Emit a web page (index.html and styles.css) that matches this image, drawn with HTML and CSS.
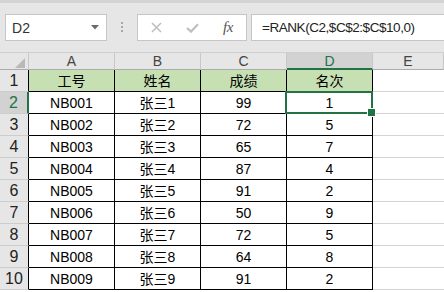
FILE: index.html
```html
<!DOCTYPE html>
<html lang="zh-CN">
<head>
<meta charset="utf-8">
<title>RANK</title>
<link rel="stylesheet" href="styles.css">
</head>
<body>
<div class="toolbar">
  <div class="namebox">
    <span class="ref">D2</span>
    <svg class="arrow" width="8" height="5" viewBox="0 0 8 5"><polygon points="0,0 8,0 4,4.5" fill="#6b6b6b"/></svg>
  </div>
  <div class="sep"><i></i><i></i><i></i></div>
  <div class="fbtns">
    <span class="btn"><svg width="11" height="11" viewBox="0 0 11 11"><path d="M1 1 L10 10 M10 1 L1 10" stroke="#bfbfbf" stroke-width="1.6" fill="none"/></svg></span>
    <span class="btn"><svg width="13" height="10" viewBox="0 0 13 10"><path d="M1 5 L5 8.6 L12 1.2" stroke="#bfbfbf" stroke-width="2.2" fill="none"/></svg></span>
    <span class="btn fx">fx</span>
  </div>
  <div class="formula">=RANK(C2,$C$2:$C$10,0)</div>
</div>

<div class="sheet">
  <div class="hd corner"><svg width="10" height="10" viewBox="0 0 10 10"><polygon points="10,0 10,10 0,10" fill="#b9b9b9"/></svg></div>
  <div class="hd">A</div><div class="hd">B</div><div class="hd">C</div><div class="hd sel">D</div><div class="hd">E</div>

  <div class="rh">1</div><div class="c g">工号</div><div class="c g">姓名</div><div class="c g">成绩</div><div class="c g">名次</div><div class="e"></div>
  <div class="rh sel">2</div><div class="c">NB001</div><div class="c">张三1</div><div class="c">99</div><div class="c cur">1</div><div class="e"></div>
  <div class="rh">3</div><div class="c">NB002</div><div class="c">张三2</div><div class="c">72</div><div class="c">5</div><div class="e"></div>
  <div class="rh">4</div><div class="c">NB003</div><div class="c">张三3</div><div class="c">65</div><div class="c">7</div><div class="e"></div>
  <div class="rh">5</div><div class="c">NB004</div><div class="c">张三4</div><div class="c">87</div><div class="c">4</div><div class="e"></div>
  <div class="rh">6</div><div class="c">NB005</div><div class="c">张三5</div><div class="c">91</div><div class="c">2</div><div class="e"></div>
  <div class="rh">7</div><div class="c">NB006</div><div class="c">张三6</div><div class="c">50</div><div class="c">9</div><div class="e"></div>
  <div class="rh">8</div><div class="c">NB007</div><div class="c">张三7</div><div class="c">72</div><div class="c">5</div><div class="e"></div>
  <div class="rh">9</div><div class="c">NB008</div><div class="c">张三8</div><div class="c">64</div><div class="c">8</div><div class="e"></div>
  <div class="rh">10</div><div class="c">NB009</div><div class="c">张三9</div><div class="c">91</div><div class="c">2</div><div class="e"></div>
</div>
</body>
</html>
```

FILE: styles.css
```css
* { box-sizing: border-box; }
html, body { margin: 0; padding: 0; }
body {
  width: 444px;
  height: 292px;
  overflow: hidden;
  background: #ffffff;
  font-family: "Liberation Sans", "Noto Sans CJK SC", sans-serif;
  color: #000;
}

/* ---------- formula bar ---------- */
.toolbar {
  height: 52px;
  background: #e6e6e6;
  border-top: 3px solid #d4d4d4;
  display: flex;
  align-items: flex-start;
  padding: 11px 0 0 5px;
}
.namebox {
  width: 102px;
  height: 27px;
  background: #fff;
  border: 1px solid #c6c6c6;
  display: flex;
  align-items: center;
  padding: 0 6px 0 6px;
}
.ref {
  font-size: 14px;
  color: #333;
  letter-spacing: 0.2px;
}
.arrow { margin-left: auto; margin-right: 1px; }
.sep {
  width: 30px;
  height: 27px;
  display: flex;
  flex-direction: column;
  align-items: center;
  gap: 2px;
  padding-top: 8px;
}
.sep i {
  display: block;
  width: 2px;
  height: 2px;
  background: #a8a8a8;
}
.fbtns {
  width: 110px;
  height: 27px;
  background: #fff;
  border: 1px solid #c6c6c6;
  display: flex;
}
.btn {
  width: 36px;
  display: flex;
  align-items: center;
  justify-content: center;
}
.fx {
  font-family: "Liberation Serif", serif;
  font-style: italic;
  font-size: 15px;
  color: #555;
  letter-spacing: -0.5px;
}
.formula {
  flex: 1;
  margin-left: 4px;
  margin-right: -2px;
  height: 27px;
  background: #fff;
  border: 1px solid #c6c6c6;
  padding-left: 10px;
  line-height: 25px;
  font-size: 13.5px;
  letter-spacing: -0.45px;
  color: #222;
  white-space: nowrap;
}

/* ---------- sheet grid ---------- */
.sheet {
  display: grid;
  grid-template-columns: 29px 86px 86px 86px 86px 1fr;
  grid-template-rows: 17px repeat(10, 22px);
  border-top: 1px solid #cfcfcf;
}
.hd {
  background: #e6e6e6;
  border-right: 1px solid #c8c8c8;
  border-bottom: 1px solid #ababab;
  display: flex;
  align-items: center;
  justify-content: center;
  font-size: 14px;
  color: #444;
}
.hd.corner {
  justify-content: flex-end;
  align-items: flex-end;
  padding: 0 3px 1px 0;
}
.hd.sel {
  background: #d2d2d2;
  color: #217346;
  border-bottom: 2px solid #217346;
}
.rh {
  background: #e6e6e6;
  border-right: 1px solid #000;
  border-bottom: 1px solid #cdcdcd;
  display: flex;
  align-items: flex-end;
  justify-content: center;
  font-size: 16px;
  line-height: 18px;
  padding-bottom: 1px;
  color: #222;
}
.rh.sel {
  background: #d2d2d2;
  color: #217346;
  border-right: 2px solid #217346;
}
.c {
  border-right: 1px solid #000;
  border-bottom: 1px solid #000;
  display: flex;
  align-items: center;
  justify-content: center;
  font-size: 14px;
  line-height: 16px;
  padding-top: 1px;
}
.g { background: #c6e0b4; }
.e {
  border-bottom: 1px solid #d4d4d4;
}
.cur { position: relative; }
.cur::before {
  content: "";
  position: absolute;
  left: -2px;
  top: -1px;
  right: -1px;
  bottom: -1px;
  border: 2px solid #217346;
}
.cur::after {
  content: "";
  position: absolute;
  right: -4px;
  bottom: -4px;
  width: 7px;
  height: 7px;
  background: #217346;
  border: 1px solid #fff;
}
```
